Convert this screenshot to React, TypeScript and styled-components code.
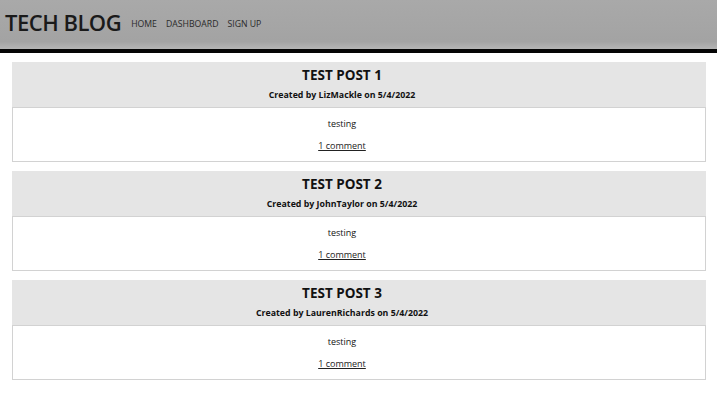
import React, { FC } from "react";
import styled, { createGlobalStyle } from "styled-components";

const GlobalStyle = createGlobalStyle`
  body {
    margin: 0;
    background: #fff;
    font-family: "Open Sans", "Noto Sans", sans-serif;
    color: #111;
  }
`;

const Header = styled.header`
  display: flex;
  align-items: center;
  height: 53px;
  padding: 0 5px 5px;
  box-sizing: border-box;
  background: linear-gradient(#a9a9a9, #a3a3a3 85%, #b5b5b5);
  border-bottom: 4px solid #050505;
`;

const Logo = styled.h1`
  margin: 0 10px 0 0;
  font-size: 22px;
  font-weight: 600;
  color: #1a1a1a;
  letter-spacing: -0.5px;
`;

const Nav = styled.nav`
  display: flex;
  gap: 9px;
  padding-top: 4px;
`;

const NavLink = styled.a`
  font-size: 8.7px;
  color: #2a2a2a;
  text-decoration: none;
`;

const Main = styled.main`
  display: flex;
  flex-direction: column;
  gap: 9px;
  padding: 9px 11px 0 12px;
`;

const Card = styled.article`
  display: flex;
  flex-direction: column;
  height: 100px;
`;

const CardHead = styled.div`
  height: 45px;
  padding: 0 34px 2px 0;
  box-sizing: border-box;
  background: #e5e5e5;
  display: flex;
  flex-direction: column;
  align-items: center;
  justify-content: center;
  gap: 5px;
`;

const PostTitle = styled.h2`
  margin: 0;
  font-size: 13.5px;
  font-weight: 700;
  line-height: 18px;
`;

const Byline = styled.p`
  margin: 0;
  font-size: 8.8px;
  font-weight: 700;
  line-height: 12px;
`;

const CardBody = styled.div`
  flex: 1;
  border: 1px solid #d2d2d2;
  display: flex;
  flex-direction: column;
  align-items: center;
  padding: 9px 34px 0 0;
  gap: 8px;
  font-size: 9px;
  line-height: 14px;
`;

const Comment = styled.a`
  color: #222;
  text-decoration: underline;
`;

const posts = [
  { title: "TEST POST 1", author: "LizMackle" },
  { title: "TEST POST 2", author: "JohnTaylor" },
  { title: "TEST POST 3", author: "LaurenRichards" },
];

const App: FC = () => (
  <>
    <GlobalStyle />
    <Header>
      <Logo>TECH BLOG</Logo>
      <Nav>
        <NavLink href="#">HOME</NavLink>
        <NavLink href="#">DASHBOARD</NavLink>
        <NavLink href="#">SIGN UP</NavLink>
      </Nav>
    </Header>
    <Main>
      {posts.map((p) => (
        <Card key={p.title}>
          <CardHead>
            <PostTitle>{p.title}</PostTitle>
            <Byline>
              Created by {p.author} on 5/4/2022
            </Byline>
          </CardHead>
          <CardBody>
            <span>testing</span>
            <Comment href="#">1 comment</Comment>
          </CardBody>
        </Card>
      ))}
    </Main>
  </>
);

export default App;
